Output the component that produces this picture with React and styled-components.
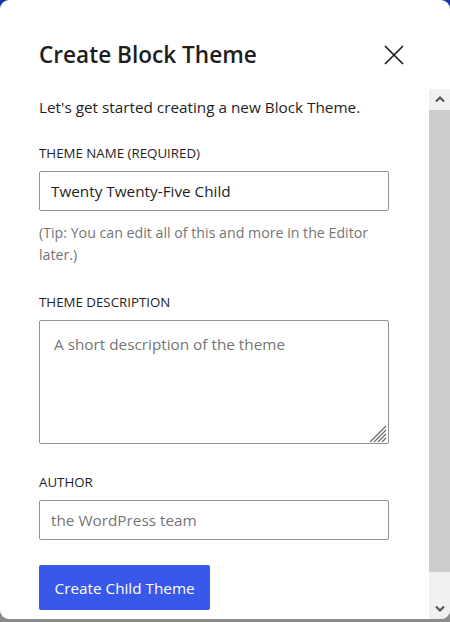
import React from "react";
import styled, { createGlobalStyle } from "styled-components";

const GlobalStyle = createGlobalStyle`
  html, body {
    margin: 0;
    padding: 0;
    width: 450px;
    height: 622px;
    overflow: hidden;
    background: linear-gradient(to bottom, #1d35a0 0%, #1d35a0 50%, #8c8c8c 50%, #8c8c8c 100%);
    font-family: "Open Sans", "Noto Sans", Arial, sans-serif;
    color: #1e1e1e;
  }
  * { box-sizing: border-box; }
`;

const Dialog = styled.div`
  width: 450px;
  height: 619px;
  background: #ffffff;
  border-radius: 9px;
  overflow: hidden;
  display: flex;
  flex-direction: column;
`;

const Header = styled.header`
  height: 89px;
  flex: none;
  display: flex;
  align-items: center;
  justify-content: space-between;
  padding: 20px 45px 0 39px;
`;

const Title = styled.h1`
  margin: 0;
  font-size: 22.6px;
  font-weight: 600;
  line-height: 28px;
  color: #1e1e1e;
`;

const CloseButton = styled.button`
  width: 22px;
  height: 22px;
  padding: 0;
  border: none;
  background: transparent;
  display: flex;
  align-items: center;
  justify-content: center;
  cursor: pointer;
  color: #1e1e1e;
`;

const Body = styled.div`
  flex: 1;
  min-height: 0;
  display: flex;
`;

const Content = styled.div`
  flex: 1;
  min-width: 0;
  padding: 7px 40px 0 39px;
  display: flex;
  flex-direction: column;
  align-items: flex-start;
`;

const Intro = styled.p`
  margin: 0 0 26px;
  font-size: 15.3px;
  line-height: 22px;
  color: #1e1e1e;
`;

const Label = styled.label`
  display: block;
  font-size: 13.3px;
  line-height: 18px;
  text-transform: uppercase;
  color: #1e1e1e;
  margin-bottom: 9px;
`;

const Field = styled.div`
  width: 100%;
  margin-bottom: ${(p) => p.$gap}px;
`;

const TextInput = styled.input`
  display: block;
  width: 100%;
  height: 40px;
  padding: 0 11px;
  border: 1px solid #949494;
  border-radius: 2px;
  font-family: inherit;
  font-size: 15.3px;
  color: #1e1e1e;
  background: #fff;
  outline: none;
  &::placeholder { color: #757575; opacity: 1; }
`;

const AreaWrap = styled.div`
  position: relative;
  width: 100%;
`;

const TextArea = styled.textarea`
  display: block;
  width: 100%;
  height: 124px;
  padding: 12px 14px;
  border: 1px solid #949494;
  border-radius: 2px;
  font-family: inherit;
  font-size: 15.3px;
  line-height: 22px;
  color: #1e1e1e;
  background: #fff;
  outline: none;
  resize: none;
  &::placeholder { color: #757575; opacity: 1; }
`;

const Grip = styled.svg`
  position: absolute;
  right: 2px;
  bottom: 1px;
  pointer-events: none;
`;

const Help = styled.p`
  margin: 11px 0 0;
  font-size: 14.2px;
  line-height: 22px;
  color: #757575;
`;

const PrimaryButton = styled.button`
  height: 45px;
  padding: 0 15.5px;
  border: none;
  border-radius: 2px;
  background: #3858e9;
  color: #ffffff;
  font-family: inherit;
  font-size: 15.3px;
  cursor: pointer;
`;

const ScrollRail = styled.div`
  width: 21px;
  flex: none;
  display: flex;
  flex-direction: column;
  background: #f0f0f0;
`;

const ScrollArrow = styled.div`
  height: ${(p) => p.$h}px;
  flex: none;
  display: flex;
  align-items: ${(p) => (p.$down ? "flex-end" : "center")};
  justify-content: center;
  padding-bottom: ${(p) => (p.$down ? 7 : 0)}px;
  color: #505050;
`;

const ScrollThumb = styled.div`
  flex: 1;
  background: #cdcdcd;
`;

const Chevron = ({ up }) => (
  <svg width="10" height="7" viewBox="0 0 10 7" aria-hidden="true">
    <path
      d={up ? "M1 5.5 L5 1.5 L9 5.5" : "M1 1.5 L5 5.5 L9 1.5"}
      fill="none"
      stroke="currentColor"
      strokeWidth="2"
    />
  </svg>
);

export default function App() {
  return (
    <>
      <GlobalStyle />
      <Dialog role="dialog" aria-label="Create Block Theme">
        <Header>
          <Title>Create Block Theme</Title>
          <CloseButton aria-label="Close">
            <svg width="20" height="20" viewBox="0 0 20 20" aria-hidden="true">
              <path d="M1 1 L19 19 M19 1 L1 19" stroke="currentColor" strokeWidth="1.7" fill="none" />
            </svg>
          </CloseButton>
        </Header>
        <Body>
          <Content>
            <Intro>Let's get started creating a new Block Theme.</Intro>
            <Field $gap={27}>
              <Label htmlFor="theme-name">Theme name (required)</Label>
              <TextInput id="theme-name" defaultValue="Twenty Twenty-Five Child" />
              <Help>(Tip: You can edit all of this and more in the Editor later.)</Help>
            </Field>
            <Field $gap={29}>
              <Label htmlFor="theme-desc">Theme description</Label>
              <AreaWrap>
                <TextArea id="theme-desc" placeholder="A short description of the theme" />
                <Grip width="18" height="18" viewBox="0 0 18 18" aria-hidden="true">
                  <path
                    d="M1 17 L17 1 M5 17 L17 5 M9 17 L17 9 M13 17 L17 13"
                    stroke="#6f6f6f"
                    strokeWidth="1.3"
                    fill="none"
                  />
                </Grip>
              </AreaWrap>
            </Field>
            <Field $gap={25}>
              <Label htmlFor="theme-author">Author</Label>
              <TextInput id="theme-author" placeholder="the WordPress team" />
            </Field>
            <PrimaryButton>Create Child Theme</PrimaryButton>
          </Content>
          <ScrollRail>
            <ScrollArrow $h={21}>
              <Chevron up />
            </ScrollArrow>
            <ScrollThumb />
            <ScrollArrow $h={47} $down>
              <Chevron />
            </ScrollArrow>
          </ScrollRail>
        </Body>
      </Dialog>
    </>
  );
}
